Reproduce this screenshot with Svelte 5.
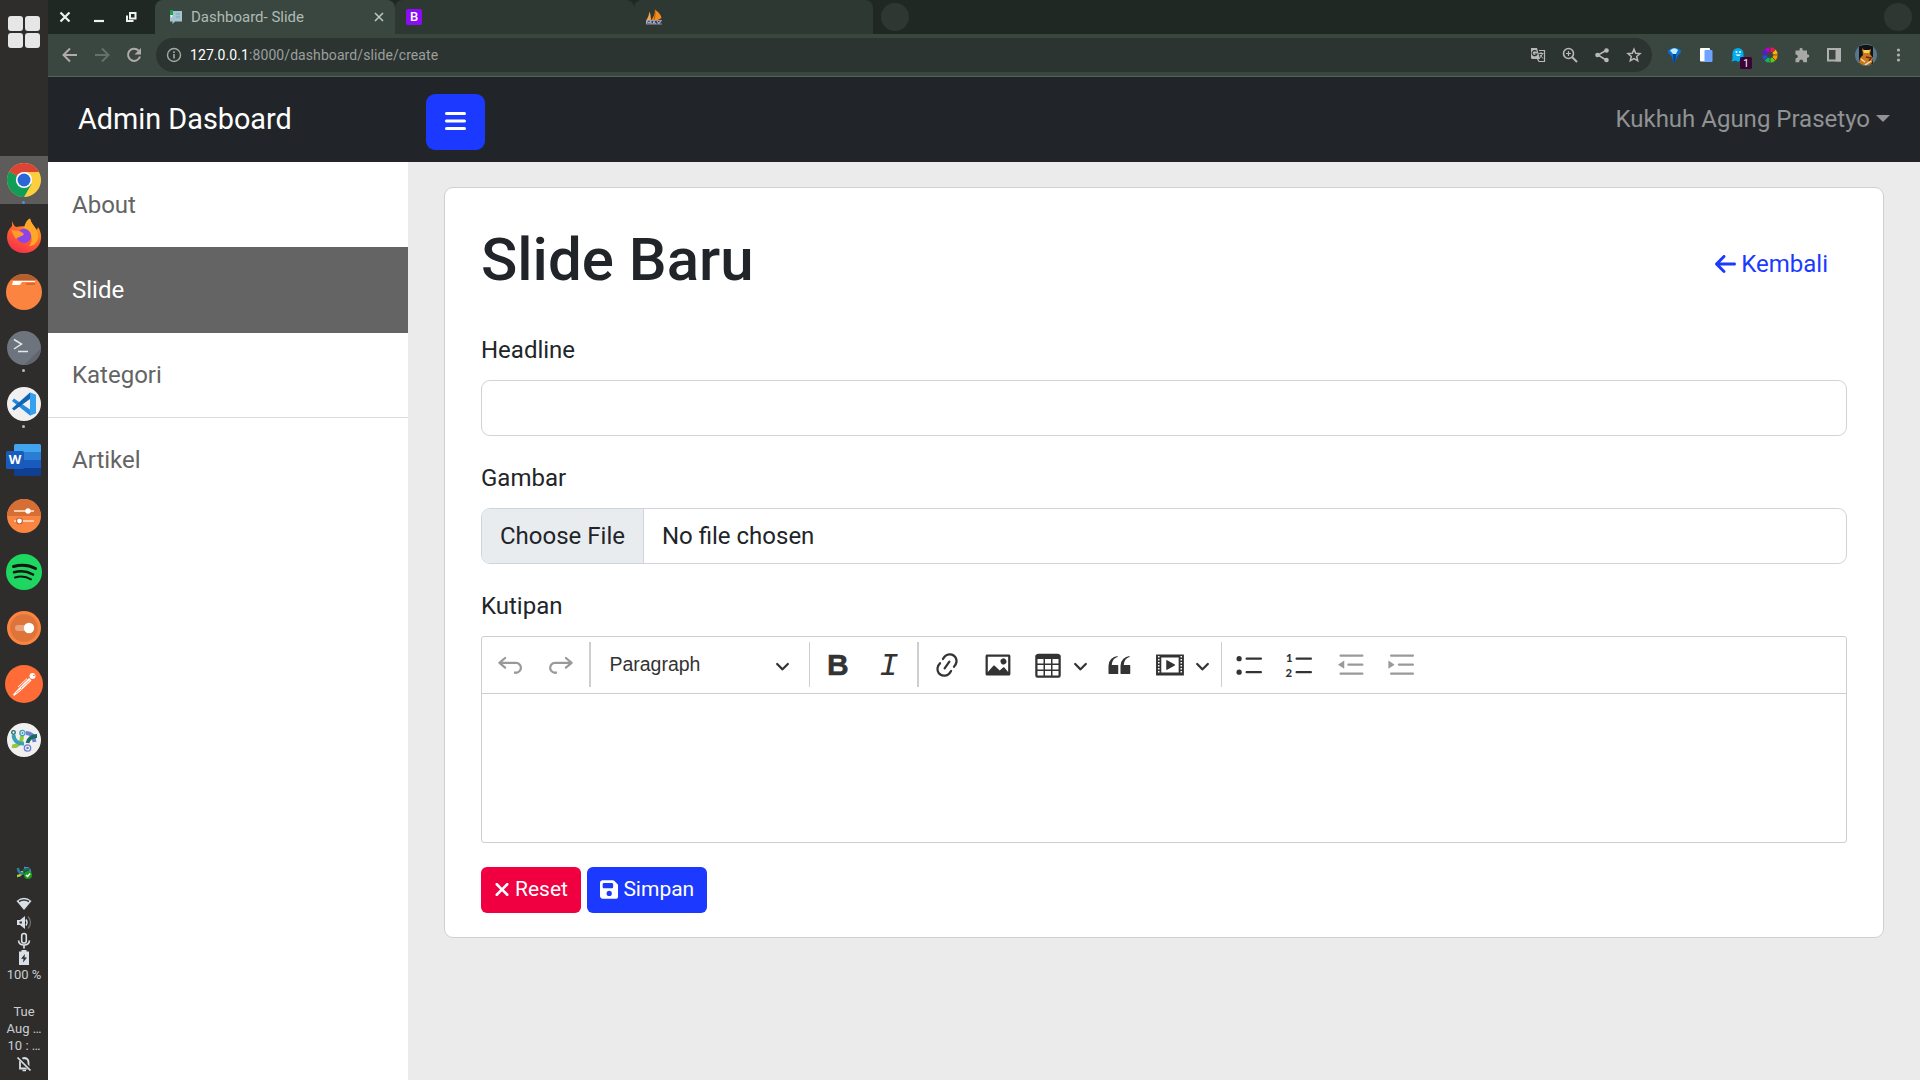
<script>
  const menu = ['About', 'Slide', 'Kategori', 'Artikel'];
  const active = 'Slide';

  // Toolbar glyphs on a 20-unit grid
  const undo = 'm5.042 9.367 2.189 1.837a.75.75 0 0 1-.965 1.149l-3.788-3.18a.747.747 0 0 1-.21-.284.75.75 0 0 1 .17-.945L6.23 4.762a.75.75 0 1 1 .964 1.15L4.863 7.866h8.917A.75.75 0 0 1 14 7.9a4 4 0 1 1-1.477 7.718l.344-1.489a2.5 2.5 0 1 0 1.094-4.73l.008-.032H5.042z';
  const redo = 'm14.958 9.367-2.189 1.837a.75.75 0 0 0 .965 1.149l3.788-3.18a.747.747 0 0 0 .21-.284.75.75 0 0 0-.17-.945L13.77 4.762a.75.75 0 1 0-.964 1.15l2.331 1.955H6.22A.75.75 0 0 0 6 7.9a4 4 0 1 0 1.477 7.718l-.344-1.489A2.5 2.5 0 1 1 6.039 9.4l-.008-.032h8.927z';
  const link = 'm11.077 15 .991-1.416a.75.75 0 1 1 1.229.86l-1.148 1.64a.748.748 0 0 1-.217.206 5.251 5.251 0 0 1-8.503-5.955.741.741 0 0 1 .12-.274l1.147-1.639a.75.75 0 1 1 1.228.86L4.933 10.7l.006.003a3.75 3.75 0 0 0 6.132 4.294l.006.004zm5.494-5.335a.748.748 0 0 1-.12.274l-1.147 1.639a.75.75 0 1 1-1.228-.86l.86-1.23a3.75 3.75 0 0 0-6.144-4.301l-.86 1.229a.75.75 0 0 1-1.229-.86l1.148-1.64a.748.748 0 0 1 .217-.206 5.251 5.251 0 0 1 8.503 5.955zm-4.563-2.532a.75.75 0 0 1 .184 1.045l-3.155 4.505a.75.75 0 1 1-1.229-.86l3.155-4.506a.75.75 0 0 1 1.045-.184z';
  const image = 'M6.91 10.54c.26-.23.64-.21.88.03l3.36 3.14 2.23-2.06a.64.64 0 0 1 .87 0l2.52 2.97V4.5H3.2v10.12l3.71-4.08zm10.27-7.51c.6 0 1.09.47 1.09 1.05v11.84c0 .59-.49 1.06-1.09 1.06H2.79c-.6 0-1.09-.47-1.09-1.06V4.08c0-.58.49-1.05 1.1-1.05h14.38zm-5.22 5.56a1.96 1.96 0 1 1 3.4-1.96 1.96 1.96 0 0 1-3.4 1.96z';
  const table = 'M3 6v3h4V6H3zm0 4v3h4v-3H3zm0 4v3h4v-3H3zm5 3h4v-3H8v3zm5 0h4v-3h-4v3zm4-4v-3h-4v3h4zm0-4V6h-4v3h4zm1.5 8a1.5 1.5 0 0 1-1.5 1.5H3A1.5 1.5 0 0 1 1.5 17V4c.222-.863 1.068-1.5 2-1.5h13c.932 0 1.778.637 2 1.5v13zM12 13v-3H8v3h4zm0-4V6H8v3h4z';
  const quote = 'M3 10.423a6.5 6.5 0 0 1 6.056-6.408l.038.67C6.448 5.423 5.354 7.663 5.22 10H9c.552 0 .5.432.5.986v4.511c0 .554-.448.503-1 .503h-5c-.552 0-.5-.449-.5-1.003v-4.574zm8 0a6.5 6.5 0 0 1 6.056-6.408l.038.67c-2.646.739-3.74 2.979-3.873 5.315H17c.552 0 .5.432.5.986v4.511c0 .554-.448.503-1 .503h-5c-.552 0-.5-.449-.5-1.003v-4.574z';
  const media = 'M18.68 3.03c.6 0 .59-.03.59.55v12.84c0 .59.01.56-.59.56H1.29c-.6 0-.59.03-.59-.56V3.58c0-.58-.01-.55.6-.55h17.38zM15.77 15V5H4.2v10h11.57zM2 4v1h1V4H2zm0 2v1h1V6H2zm0 2v1h1V8H2zm0 2v1h1v-1H2zm0 2v1h1v-1H2zm0 2v1h1v-1H2zM17 4v1h1V4h-1zm0 2v1h1V6h-1zm0 2v1h1V8h-1zm0 2v1h1v-1h-1zm0 2v1h1v-1h-1zm0 2v1h1v-1h-1zM7.5 7.177a.4.4 0 0 1 .593-.351l5.133 2.824a.4.4 0 0 1 0 .7l-5.133 2.824a.4.4 0 0 1-.593-.35V7.176v.001z';

  const wheel = ['#f0145a', '#ffb400', '#ff9800', '#5cc81e', '#14b45a', '#1e50dc', '#5a14dc', '#b400c8'];
  const wedge = (i) => {
    const p = (a, r) => `${(r * Math.sin(a)).toFixed(2)} ${(-r * Math.cos(a)).toFixed(2)}`;
    const a = (i * Math.PI) / 4, b = a + Math.PI / 4;
    return `M${p(a, 8)}A8 8 0 0 1 ${p(b, 8)}L${p(b, 3)}A3 3 0 0 0 ${p(a, 3)}Z`;
  };
</script>

{#snippet glyph(d)}
  <svg class="ck-icon" viewBox="0 0 20 20"><path {d} /></svg>
{/snippet}
{#snippet chevron()}
  <svg class="chev" viewBox="0 0 10 10"><path d="M.941 4.523a.75.75 0 1 1 1.06-1.06l3.006 3.005 3.005-3.005a.75.75 0 1 1 1.06 1.06l-3.549 3.55a.75.75 0 0 1-1.168-.136L.941 4.523z" /></svg>
{/snippet}

<div class="screen">
  <aside class="dock">
    <div class="apps"><i></i><i></i><i></i><i></i></div>

    <div class="app running">
      <svg viewBox="-20 -20 40 40">
        <circle r="17" fill="#fdcf3e" />
        <path d="M0 0L-14.7-8.5A17 17 0 0 1 14.7-8.5L14.9-8H0Z" fill="#dd4436" />
        <path d="M0 0L-14.7-8.5A17 17 0 0 0 0 17L7.5 4Z" fill="#119d57" />
        <path d="M0-8H14.9L14.7-8.5H0Z" fill="#dd4436" />
        <circle r="8.1" fill="#fff" /><circle r="6.5" fill="#2a66d6" />
      </svg>
      <b class="dot blue"></b>
    </div>
    <div class="app">
      <svg viewBox="-20 -20 40 40">
        <defs>
          <linearGradient id="fox" x1=".8" y1="0" x2=".3" y2="1"><stop offset="0" stop-color="#ffbd30" /><stop offset=".45" stop-color="#ff6a2a" /><stop offset="1" stop-color="#f5304c" /></linearGradient>
        </defs>
        <path d="M-12-15C-11-12-10-10-8-9C-3-10 1-10 3-9C1-13 3-16 6-17.5C7-13 10-10 13-6L14-9C17-4 17.500 0 17 3C16 11 9 17 0 17C-10 17-17 10-17 1C-17-4-15-7-12-10Z" fill="url(#fox)" />
        <path d="M0-8C1-13 3-16 6-17.500C7-11 14-8 14.500 1C13 8 9 10 5 10C10 5 8-5 0-8Z" fill="#ffa726" />
        <circle cy="0" cx="0" r="7.200" fill="#8f45e6" />
        <path d="M-13-6C-9-5-5-7 0-2C-2 1-5 0-8 3C-10 1-11-3-13-6Z" fill="#ff9a2c" />
      </svg>
    </div>
    <div class="app">
      <svg viewBox="-20 -20 40 40">
        <circle r="18" fill="#fb8441" />
        <path d="M-13.500-12A18 18 0 0 1 13.500-12Z" fill="#b45f30" />
        <path d="M-11-11H11V-10H-2L-4-7H-12Z" fill="#fff" /><path d="M2-9H11V-7H2Z" fill="#d56a33" />
      </svg>
    </div>
    <div class="app">
      <svg viewBox="-20 -20 40 40">
        <circle r="17" fill="#6e747d" /><path d="M0 17L17 0A17 17 0 0 1 4 16.500Z" fill="#62676f" />
        <path d="M-10-8.500L-2.500-4L-10 1M-6 3.500H4" fill="none" stroke="#e4e7ea" stroke-width="1.500" />
      </svg>
      <b class="dot"></b>
    </div>
    <div class="app">
      <svg viewBox="-20 -20 40 40">
        <circle r="17" fill="#f0f0f0" />
        <path d="M6-11.500L12-9V9L6 11.500L-12-3L-10-5.500L6 5.500Z" fill="#2489e0" />
        <path d="M6-11.500V-5L-10 6.500L-12 4.500Z" fill="#0f66b4" /><path d="M6-11.500L12-9V9L6 11.500Z" fill="#33a1f0" />
      </svg>
      <b class="dot"></b>
    </div>
    <div class="app">
      <svg viewBox="-20 -20 40 40">
        <path d="M-8.500-16H15.500Q17-16 17-14.500V-8H-10V-14.500Q-10-16-8.500-16Z" fill="#41a5ee" />
        <path d="M-10-8H17V0H-10Z" fill="#2b7cd3" /><path d="M-10 0H17V8H-10Z" fill="#185abd" />
        <path d="M-10 8H17V14.500Q17 16 15.500 16H-8.500Q-10 16-10 14.500Z" fill="#103f91" />
        <rect x="-18" y="-9" width="18" height="18" rx="1.500" fill="#185abd" />
        <text x="-9" y="4.300" text-anchor="middle" class="w">W</text>
      </svg>
    </div>
    <div class="app">
      <svg viewBox="-20 -20 40 40">
        <circle r="17" fill="#fb8441" /><path d="M-17 0A17 17 0 0 1 17 0Z" fill="#d66f36" />
        <path d="M-10-5H10M-10 5H10" stroke="#f8c8aa" stroke-width="1.800" />
        <circle cx="4" cy="-5" r="2.700" fill="#fff" /><circle cx="-4.500" cy="5" r="3.300" fill="#a9552a" /><circle cx="-4.500" cy="5" r="2.400" fill="#fff" />
      </svg>
    </div>
    <div class="app">
      <svg viewBox="-20 -20 40 40">
        <circle r="18" fill="#1ed760" />
        <g fill="none" stroke="#191414" stroke-linecap="round"><path d="M-10.500-5.500C-3-7.500 5-7 11.500-3.500" stroke-width="3" /><path d="M-10 .3C-4-1.500 3-1 9 2.500" stroke-width="2.500" /><path d="M-9 5.500C-4 4 2 4.300 7 7.300" stroke-width="2" /></g>
      </svg>
    </div>
    <div class="app">
      <svg viewBox="-20 -20 40 40">
        <circle r="17" fill="#fb8441" /><circle r="13.800" fill="#dd753b" />
        <rect x="-9" y="-3" width="15" height="6" rx="3" fill="#eba07a" /><circle cx="5" r="5.200" fill="#fff" />
      </svg>
    </div>
    <div class="app">
      <svg viewBox="-20 -20 40 40">
        <circle r="19" fill="#ff6c37" />
        <g transform="translate(0 .5)"><circle cx="8.500" cy="-8.500" r="3" fill="#fff" /><path d="M9-9L11-9.500" stroke="#ff6c37" />
        <path d="M5-6.500L7.500-4L-4 7L-10 11.500L-11 10L-5 3.500Z" fill="#fff" /><path d="M5.500-4L-3 3.500M-5 1L3-5M-8 8.500L-2 4" stroke="#ff6c37" stroke-width=".7" /><path d="M-6 2.500L3-6" stroke="#fff" stroke-width="1" /></g>
      </svg>
    </div>
    <div class="app">
      <svg viewBox="-20 -20 40 40">
        <circle r="17" fill="#f0f0f0" />
        <g fill="none" stroke-width="3.800"><path d="M-12 6C-7 7-2 3-2-4" stroke="#95c93d" /><path d="M2-7C7-7 10-4 10.500 2" stroke="#6c7fd0" /><path d="M-10.500-5C-10 1-6 4 0 3.500" stroke="#3aa0b8" /><path d="M3.500 3C4-1 8-4 13-4" stroke="#176b62" /></g>
        <g fill="#f0f0f0" stroke-width="1.300"><circle cx="-10.500" cy="-7.500" r="1.800" stroke="#176b62" /><circle cx="-1.500" cy="-7" r="2.600" stroke="#3aa0b8" /><circle cx="3.500" cy="8" r="3.200" stroke="#6c7fd0" /></g>
        <circle cx="-1.500" cy="-7" r="1" fill="#3aa0b8" /><circle cx="3.500" cy="8" r="1.300" fill="#6c7fd0" />
      </svg>
    </div>

    <div class="tray">
      <svg class="sync" viewBox="-8 -8 16 16">
        <g fill="none" stroke-width="2.500"><path d="M-7 4C-4 4-2 2-2-1" stroke="#a4cf3f" /><path d="M-6-4C-6 1-2 2 0 1" stroke="#2b7f9c" /><path d="M0-4C4-4 6-4 6 0" stroke="#4a8fd0" /><path d="M-1-1C2-4 4-2 6-3" stroke="#176b62" /></g>
        <circle cx="4" cy="3" r="4" fill="#1c9c1c" /><path d="M2 3L3.500 4.500L6.200 1.500" fill="none" stroke="#fff" stroke-width="1.400" />
      </svg>
      <svg viewBox="0 0 16 16" height="19"><path d="M8 14.500L.5 5.500Q8-1 15.500 5.500Z" fill="#d9dfe6" /><path d="M3 6Q8 2.800 13 6" stroke="#35363a" stroke-width="1.500" fill="none" /></svg>
      <svg viewBox="0 0 16 16" height="19"><path d="M1 5.500H4L9 1.500V14.500L4 10.500H1Z" fill="#d9dfe6" /><path d="M3.500 7H6V9H3.500Z" fill="#35363a" /><path d="M10 5Q12 8 10 11" stroke="#d9dfe6" stroke-width="1.500" fill="none" /><path d="M12 2Q17 8 12 14" stroke="#6d6d6d" stroke-width="1.300" fill="none" /></svg>
      <svg viewBox="0 0 16 16" height="17"><rect x="5.700" y="1" width="4.600" height="9.500" rx="2.300" fill="none" stroke="#d9dfe6" stroke-width="1.600" /><path d="M2.500 8Q3 12.500 8 12.500T13.500 8M8 12.500V16" fill="none" stroke="#d9dfe6" stroke-width="1.700" /></svg>
      <svg viewBox="0 0 16 16" height="17"><path d="M5.500 .5H10.500V2H13V15.500H3V2H5.500Z" fill="#d9dfe6" /><path d="M9 4.500L5 9.300H7.500L7 13L11 8H8.500Z" fill="#2f2d2b" /></svg>
      <span class="pct">100 %</span>
      <span class="gap">Tue</span>
      <span>Aug …</span>
      <span>10 : …</span>
      <svg viewBox="0 0 16 16" height="19"><path d="M4 13H12.500V7Q12.500 3 8.500 2.500Q5 3 4 6Z" fill="none" stroke="#d9dfe6" stroke-width="1.800" /><path d="M6.500 15H10" stroke="#d9dfe6" stroke-width="1.500" /><path d="M2 1L15 15" stroke="#2f2d2b" stroke-width="3.500" /><path d="M1.500 2L14.500 15" stroke="#d9dfe6" stroke-width="1.700" /></svg>
    </div>
  </aside>

  <div class="browser">
    <div class="strip">
      <div class="winbtns">
        <svg width="34" height="34" viewBox="0 0 34 34"><path d="M12.500 12.500L21.500 21.500M21.500 12.500L12.500 21.500" stroke="#f0f2f1" stroke-width="2.200" /></svg>
        <svg width="34" height="34" viewBox="0 0 34 34"><path d="M12 21H22" stroke="#f0f2f1" stroke-width="2.200" /></svg>
        <svg width="34" height="34" viewBox="0 0 34 34"><path d="M14 13H19.500V18.500H14Z M11 15.500V21H17.500" fill="none" stroke="#f0f2f1" stroke-width="2" /></svg>
      </div>
      <div class="tab on">
        <svg width="16" height="16" viewBox="0 0 16 16"><path d="M3 2H15V12.500H8L5.500 15V12.500H3Z" fill="#a5c4d1" /><path d="M9 5H13M9 8H13" stroke="#7fa3b3" /><path d="M3 1H6V6L4.500 8L3 6Z" fill="#16a34a" /><path d="M3 6H6L4.500 9Z" fill="#eee" /></svg>
        <span>Dashboard- Slide</span>
        <svg class="x" width="10" height="10" viewBox="0 0 10 10"><path d="M1 1L9 9M9 1L1 9" stroke="#c0cac5" stroke-width="1.500" /></svg>
      </div>
      <div class="tab"><em class="bs">B</em></div>
      <div class="tab last">
        <svg width="16" height="16" viewBox="0 0 16 16"><path d="M.5 11Q3 7 3.500 2.500Q5 6 5 11Z" fill="#f9a64a" /><path d="M5.500 11Q9 6 9 .5Q15 5 15.500 9L12 11Z" fill="#f28a1c" /><path d="M8 11Q9.500 6 9 .5" stroke="#8a4a10" fill="none" stroke-width=".7" /><path d="M0 11.500H16M0 15H16" stroke="#8e8fb0" stroke-width="1" /><path d="M.5 15V12L3 14L5 12V15M7 15L8 12L9.500 15M11 12L13 15M15 12L13 14" stroke="#a5a6c8" stroke-width="1.200" fill="none" /></svg>
      </div>
      <b class="round"></b>
      <b class="round end"></b>
    </div>

    <div class="bar">
      <div class="nav">
        <svg viewBox="0 0 32 32"><path d="M23 16H10M16 9.500L9.500 16L16 22.500" fill="none" stroke="#b1aba9" stroke-width="2" /></svg>
        <svg viewBox="0 0 32 32"><path d="M9 16H22M16 9.500L22.500 16L16 22.500" fill="none" stroke="#66706b" stroke-width="2" /></svg>
        <svg viewBox="0 0 32 32"><path d="M20.500 11.500A6.100 6.100 0 1 0 22 17.500" fill="none" stroke="#b1aba9" stroke-width="2" /><path d="M23 9V15.500H16.500Z" fill="#b1aba9" /></svg>
      </div>
      <div class="omni">
        <svg class="info" viewBox="0 0 16 16"><circle cx="8" cy="8" r="6.500" fill="none" stroke="#a1aaa6" stroke-width="1.400" /><path d="M8 7V11.500M8 4.300V6" stroke="#a1aaa6" stroke-width="1.600" /></svg>
        <p><strong>127.0.0.1</strong>:8000/dashboard/slide/create</p>
        <svg viewBox="0 0 32 32"><path d="M9 9H15L18 20H10.500Q9 20 9 18.500Z" fill="#b8b8b8" /><path d="M14.500 12.500A2.500 2.500 0 1 0 15 15H12.500" fill="none" stroke="#2c3431" stroke-width="1.200" /><path d="M17 11.500H22.500V22.500H17L15 19" fill="none" stroke="#b8b8b8" stroke-width="1.200" /><path d="M16.500 14.500H21.500M19 13V14.500M20.500 14.500Q19.500 18 17 19.500M18 16L21 19.500" stroke="#b8b8b8" fill="none" /></svg>
        <svg viewBox="0 0 32 32"><circle cx="14.500" cy="14.500" r="5" fill="none" stroke="#b8b8b8" stroke-width="1.600" /><path d="M18 18L23 23" stroke="#b8b8b8" stroke-width="2" /><path d="M12 14.500H17M14.500 12V17" stroke="#b8b8b8" stroke-width="1.200" /></svg>
        <svg viewBox="0 0 32 32"><path d="M20 11.500L12 16L20 21" fill="none" stroke="#b8b8b8" stroke-width="1.500" /><circle cx="20.500" cy="11.500" r="2.300" fill="#b8b8b8" /><circle cx="11.500" cy="16" r="2.300" fill="#b8b8b8" /><circle cx="20.500" cy="21" r="2.300" fill="#b8b8b8" /></svg>
        <svg viewBox="0 0 32 32"><path d="M16 10.200L17.700 14.200L22 14.600L18.700 17.500L19.700 21.700L16 19.500L12.300 21.700L13.300 17.500L10 14.600L14.300 14.200Z" fill="none" stroke="#b8b8b8" stroke-width="1.500" /></svg>
      </div>
      <div class="ext">
        <svg viewBox="0 0 32 32"><path d="M10 11.500Q16.500 6 23 11.500L22.500 14Q18.500 17 17.800 23H15.200Q14.500 17 10.500 14Z" fill="#0872d8" /><path d="M12 11.500Q16.500 7.500 20 11L18 15H15Z" fill="#c3ecff" /><path d="M15 15H18L17.500 23H15.500Z" fill="#04448f" /></svg>
        <svg viewBox="0 0 32 32"><rect x="10" y="9" width="10" height="13.500" rx="1" fill="#fff" /><rect x="14.500" y="11" width="8" height="12" rx="1" fill="#6ea3ff" /></svg>
        <svg viewBox="0 0 32 32"><path d="M10.500 14.500A5.500 5.500 0 0 1 21.500 14.500V21L20 23L18 21.500L16 23L14 21.500L9.500 22.500Q11 20 10.500 18Z" fill="#00aef0" /><circle cx="14.500" cy="13" r="1" fill="#fff" /><circle cx="18" cy="13" r="1" fill="#fff" /><path d="M13.500 15.500Q16.300 18.500 19 15.500Z" fill="#fff" /><rect x="18" y="18" width="12" height="12" rx="1.500" fill="#3a0436" /><text x="24" y="28" text-anchor="middle" class="badge">1</text></svg>
        <svg viewBox="-16 -16 32 32">{#each wheel as c, i}<path d={wedge(i)} fill={c} stroke="#3a4740" stroke-width=".6" />{/each}</svg>
        <svg viewBox="0 0 32 32"><path d="M9.500 11.500H13.500Q13 9 15 8.800Q17 9 16.800 11.500H21V15.200Q23.300 15 23.300 17Q23.300 19 21 18.800V23.300H17.300Q17.300 20.600 15.300 20.600Q13.200 20.600 13.200 23.300H9.500V19.500Q11.800 19.200 11.800 17.500Q11.800 15.800 9.500 15.600Z" fill="#a8a8a8" /></svg>
        <svg viewBox="0 0 32 32"><path d="M10 10H22V21.500H10Z" fill="none" stroke="#b0b0b0" stroke-width="2" /><path d="M17.500 9H23V22.500H17.500Z" fill="#b0b0b0" /></svg>
        <svg viewBox="-16 -16 32 32"><circle r="11" fill="#55788c" /><path d="M-7-8.500Q0-12 7-8.500V8.500Q0 12-7 8.500Z" fill="#111217" /><path d="M-4-7L-2-5H3L5-6L4-1L7 3L6 8L3 10H-3L-7 8L-6 3L-3 0Z" fill="#c9781c" /><path d="M-3-5L4-5L3-2H-2Z" fill="#f7cf5a" /><path d="M0 2L5 3L3 6" fill="none" stroke="#6b2a10" stroke-width="1.500" /><path d="M-5 4L-1 7M-1 10L5 6" stroke="#f3e1c0" stroke-width="1.500" /></svg>
        <svg viewBox="0 0 32 32"><g fill="#b0b0b0"><circle cx="16.500" cy="11" r="1.600" /><circle cx="16.500" cy="16" r="1.600" /><circle cx="16.500" cy="21" r="1.600" /></g></svg>
      </div>
    </div>

    <header>
      <span class="brand">Admin Dasboard</span>
      <button class="burger" aria-label="Menu"><svg width="21" height="24" viewBox="0 0 448 512"><path d="M0 96C0 78.300 14.300 64 32 64H416a32 32 0 0 1 0 64H32C14.300 128 0 113.700 0 96zM0 256c0-17.700 14.300-32 32-32H416a32 32 0 0 1 0 64H32c-17.700 0-32-14.300-32-32zM448 416a32 32 0 0 1-32 32H32a32 32 0 0 1 0-64H416a32 32 0 0 1 32 32z" fill="#fff" /></svg></button>
      <span class="user">Kukhuh Agung Prasetyo</span>
    </header>

    <div class="body">
      <nav>
        {#each menu as m}
          <a href="#top" class:active={m === active}>{m}</a>
        {/each}
      </nav>
      <main>
        <section class="card">
          <div class="head">
            <h1>Slide Baru</h1>
            <a class="back" href="#top"><svg width="21" height="24" viewBox="0 0 448 512"><path d="M9.400 233.400c-12.500 12.500-12.500 32.800 0 45.300l160 160c12.500 12.500 32.800 12.500 45.300 0s12.500-32.800 0-45.300L109.200 288H416c17.700 0 32-14.300 32-32s-14.300-32-32-32H109.300L214.600 118.600c12.500-12.500 12.500-32.800 0-45.300s-32.800-12.500-45.300 0l-160 160z" fill="currentColor" /></svg>Kembali</a>
          </div>
          <div class="label">Headline</div>
          <div class="input"></div>
          <div class="label">Gambar</div>
          <div class="input file"><span class="choose">Choose File</span><span>No file chosen</span></div>
          <div class="label">Kutipan</div>
          <div class="editor">
            <div class="tools">
              <div class="t off">{@render glyph(undo)}</div>
              <div class="t off">{@render glyph(redo)}</div>
              <i class="sep thick"></i>
              <div class="select"><span>Paragraph</span>{@render chevron()}</div>
              <i class="sep"></i>
              <div class="t bold">B</div>
              <div class="t ital">I</div>
              <i class="sep thick"></i>
              <div class="t">{@render glyph(link)}</div>
              <div class="t">{@render glyph(image)}</div>
              <div class="t">{@render glyph(table)}</div>
              <div class="drop">{@render chevron()}</div>
              <div class="t">{@render glyph(quote)}</div>
              <div class="t">{@render glyph(media)}</div>
              <div class="drop wide">{@render chevron()}</div>
              <i class="sep"></i>
              <div class="t">
                <svg class="ck-icon" viewBox="0 0 20 20"><circle cx="2.750" cy="5.750" r="1.750" /><circle cx="2.750" cy="14.750" r="1.750" /><rect x="7" y="5" width="11" height="1.500" rx=".75" /><rect x="7" y="14" width="11" height="1.500" rx=".75" /></svg>
              </div>
              <div class="t">
                <svg class="ck-icon" viewBox="0 0 20 20"><text x=".6" y="8" class="num">1</text><text x=".4" y="17.900" class="num">2</text><rect x="7" y="5" width="11" height="1.500" rx=".75" /><rect x="7" y="14" width="11" height="1.500" rx=".75" /></svg>
              </div>
              <div class="t off">
                <svg class="ck-icon" viewBox="0 0 20 20"><rect x="2.300" y="3" width="16" height="1.500" rx=".75" /><rect x="7.500" y="9" width="10.800" height="1.500" rx=".75" /><rect x="2.300" y="15" width="16" height="1.500" rx=".75" /><path d="M1.300 9.750L5.500 6.950V12.550Z" /></svg>
              </div>
              <div class="t off">
                <svg class="ck-icon" viewBox="0 0 20 20"><rect x="2" y="3" width="16" height="1.500" rx=".75" /><rect x="7.200" y="9" width="10.800" height="1.500" rx=".75" /><rect x="2" y="15" width="16" height="1.500" rx=".75" /><path d="M5.100 9.750L.9 6.950V12.550Z" /></svg>
              </div>
            </div>
            <div class="area"></div>
          </div>
          <div class="actions">
            <button class="btn red"><svg width="14" height="21" viewBox="0 0 320 512"><path d="M310.600 150.600c12.500-12.500 12.500-32.800 0-45.300s-32.800-12.500-45.300 0L160 210.700 54.600 105.400c-12.500-12.500-32.800-12.500-45.300 0s-12.500 32.800 0 45.300L114.700 256 9.400 361.400c-12.500 12.500-12.500 32.800 0 45.300s32.800 12.500 45.300 0L160 301.300 265.400 406.600c12.500 12.500 32.800 12.500 45.300 0s12.500-32.800 0-45.300L205.300 256 310.600 150.600z" fill="#fff" /></svg>Reset</button>
            <button class="btn blue"><svg width="18.400" height="21" viewBox="0 0 448 512"><path d="M64 32C28.700 32 0 60.700 0 96V416c0 35.300 28.700 64 64 64H384c35.300 0 64-28.700 64-64V173.300c0-17-6.700-33.300-18.700-45.300L352 50.700C340 38.700 323.700 32 306.700 32H64zm0 96c0-17.700 14.300-32 32-32H288c17.700 0 32 14.300 32 32v64c0 17.700-14.300 32-32 32H96c-17.700 0-32-14.300-32-32V128zM224 288a64 64 0 1 1 0 128 64 64 0 1 1 0-128z" fill="#fff" /></svg>Simpan</button>
          </div>
        </section>
      </main>
    </div>
  </div>
</div>

<style>
  :global(body) { margin: 0; overflow: hidden; }
  * { box-sizing: border-box; }
  .screen { display: flex; width: 1920px; height: 1080px; font-family: Roboto, sans-serif; font-size: 24px; line-height: 36px; color: #212529; overflow: hidden; }
  svg { display: block; flex: none; }
  a { text-decoration: none; }
  button { border: 0; font: inherit; color: #fff; }

  .dock { width: 48px; background: #2f2d2b; display: flex; flex-direction: column; }
  .apps { display: grid; grid-template-columns: 15px 15px; gap: 2px; padding: 16px 8px 0; height: 152px; align-content: start; }
  .apps i { height: 15px; border-radius: 3px; background: #e6e6e6; }
  .app { position: relative; height: 56px; display: flex; align-items: center; justify-content: center; }
  .app svg { width: 40px; height: 40px; }
  .app.running { background: linear-gradient(#5d5c5a, #5d5c5a) center / 48px 48px no-repeat; }
  .dot { position: absolute; left: 22px; top: 49px; width: 3px; height: 3px; border-radius: 50%; background: #b9b9b9; }
  .dot.blue { background: #4a90e2; }
  .w { font: 700 13px 'Open Sans', sans-serif; fill: #fff; }
  .tray { margin-top: 95px; display: flex; flex-direction: column; align-items: center; font-size: 13px; line-height: 17px; color: #c9ced3; white-space: nowrap; }
  .tray svg { width: 16px; }
  .tray .sync { height: 18px; margin-bottom: 13px; }
  .tray .gap { margin-top: 20px; }

  .browser { flex: 1; display: flex; flex-direction: column; min-width: 0; }
  .strip { height: 34px; background: #202824; display: flex; align-items: center; }
  .winbtns { display: flex; width: 107px; }
  .tab { width: 238.500px; height: 34px; background: #2d3832; border-radius: 8px 8px 0 0; display: flex; align-items: center; padding-left: 11px; }
  .tab.on { width: 240px; background: #3a4740; padding-left: 12px; font-size: 15px; color: #b0bab5; }
  .tab.on span { margin-left: 8px; flex: 1; }
  .tab.on .x { margin-right: 11px; }
  .tab.last { width: 239.500px; padding-left: 12px; }
  .bs { width: 16px; height: 16px; border-radius: 2px; background: #8a0df5; color: #fff; font: 500 13px/16px Roboto, sans-serif; text-align: center; }
  .round { width: 28px; height: 28px; border-radius: 50%; background: #2d3832; margin-left: 8px; }
  .round.end { margin-left: auto; margin-right: 8px; }

  .bar { height: 43px; background: #3a4740; border-bottom: 1px solid #56635c; display: flex; align-items: center; }
  .nav { display: flex; padding-left: 6px; width: 108px; }
  .nav svg, .omni svg, .ext svg { width: 32px; height: 32px; }
  .omni { width: 1496px; height: 34px; border-radius: 17px; background: #2c3431; display: flex; align-items: center; padding: 0 2px 0 10px; }
  .omni .info { width: 16px; height: 16px; }
  .omni p { margin: 0 0 0 8px; flex: 1; font-size: 14px; line-height: 20px; color: #9b9f9d; letter-spacing: .08px; }
  .omni strong { font-weight: 400; color: #fff; }
  .ext { display: flex; padding-left: 6px; }
  .badge { font: 10px Roboto, sans-serif; fill: #fff; }

  header { height: 85px; background: #212529; display: flex; align-items: center; color: #fff; }
  .brand { width: 378px; padding: 0 0 2px 30px; font-size: 28.800px; }
  .burger { width: 59px; height: 56px; margin-top: 4px; border-radius: 9px; background: #1c39ff; display: flex; align-items: center; justify-content: center; padding: 0 0 2px; }
  .user { margin-left: auto; margin-right: 30px; padding-bottom: 2px; color: #909294; display: flex; align-items: center; gap: 6px; }
  .user::after { content: ''; border: 7.200px solid transparent; border-top-color: #909294; border-bottom: 0; margin-top: -1px; }

  .body { flex: 1; display: flex; background: #ebebeb; }
  nav { width: 360px; background: #fff; }
  nav a { display: block; height: 84px; padding: 24px; line-height: 36px; color: #636463; }
  nav a:first-child { height: 85px; padding-top: 25px; }
  nav a:nth-child(3) { height: 85px; border-bottom: 1px solid #dcdcdd; }
  nav a.active { height: 86px; padding-top: 25px; background: #636463; color: #fff; }
  main { flex: 1; padding: 25px 36px; }
  .card { height: 751px; background: #fff; border: 1px solid #cfd0d1; border-radius: 9px; padding: 35px 36px; }
  .head { display: flex; justify-content: space-between; align-items: center; height: 80px; margin-bottom: 29px; }
  h1 { margin: -6px 0 0; font-size: 60px; line-height: 72px; font-weight: 500; }
  .back { display: flex; align-items: center; gap: 5.500px; color: #1c39ff; padding: 2px 19px 0 0; }
  .back svg { margin-top: -1px; }
  .label { margin-bottom: 12px; height: 36px; }
  .input { height: 56px; border: 1px solid #ced4da; border-radius: 9px; margin-bottom: 24px; display: flex; align-items: center; overflow: hidden; }
  .choose { height: 54px; line-height: 54px; padding: 0 18px; margin-right: 18px; background: #e9ecef; border-right: 1px solid #ced4da; }
  .editor { border: 1px solid #ccced1; border-radius: 3px; height: 207px; }
  .tools { height: 57px; border-bottom: 1px solid #ccced1; display: flex; align-items: center; padding-left: 3px; color: #333; font-family: 'Liberation Sans', sans-serif; }
  .ck-icon { width: 30px; height: 30px; fill: currentColor; }
  .chev { width: 15px; height: 15px; fill: #333; }
  .t { width: 50.700px; height: 45px; display: flex; align-items: center; justify-content: center; flex: none; }
  .off { color: #999; }
  .sep { width: 1px; height: 45px; background: #ccced1; margin: -1px 2.500px 0; flex: none; }
  .sep.thick { width: 2px; }
  .select { width: 213px; display: flex; align-items: center; justify-content: space-between; padding: 0 16px 0 16px; font-size: 19.500px; }
  .select span { margin-top: -2px; }
  .bold { font: 700 30px/45px 'Liberation Sans', sans-serif; -webkit-text-stroke: .5px #333; padding-bottom: 1px; }
  .ital { width: 51.700px; font: italic 400 32px/45px 'Liberation Mono', monospace; padding-top: 3px; }
  .drop { width: 16px; display: flex; justify-content: center; margin: 0 5px 0 -1px; }
  .drop.wide { margin-right: 8px; }
  .num { font: 900 7.500px Lato, sans-serif; }
  .actions { display: flex; gap: 6px; margin-top: 24px; }
  .btn { height: 46px; border-radius: 6px; padding: 0 13px 2px 14px; font-size: 21px; line-height: 44px; display: flex; align-items: center; gap: 6px; }
  .btn.red { width: 100px; background: #f10041; }
  .btn.blue { width: 120px; padding-left: 13px; gap: 5px; background: #1c39ff; }
</style>
